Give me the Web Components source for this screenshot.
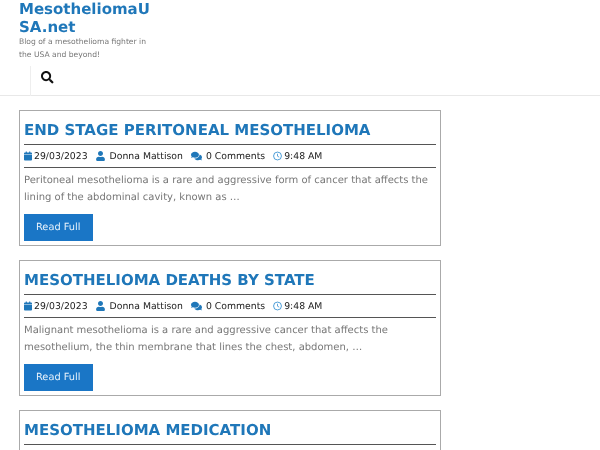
<!DOCTYPE html>
<html>
<head>
<meta charset="utf-8">
<style>
  html, body { margin: 0; padding: 0; background: #fff; overflow: hidden; height: 450px; }
  /* the reference is a soft, downscaled capture */
  body { font-family: "DejaVu Sans", sans-serif; text-rendering: geometricPrecision; filter: blur(.3px); }
</style>
</head>
<body>
<site-header></site-header>
<blog-list>
  <post-card heading="END STAGE PERITONEAL MESOTHELIOMA">Peritoneal mesothelioma is a rare and aggressive form of cancer that affects the lining of the abdominal cavity, known as …</post-card>
  <post-card heading="MESOTHELIOMA DEATHS BY STATE">Malignant mesothelioma is a rare and aggressive cancer that affects the mesothelium, the thin membrane that lines the chest, abdomen, …</post-card>
  <post-card heading="MESOTHELIOMA MEDICATION"></post-card>
</blog-list>
<script>
class SiteHeader extends HTMLElement {
  constructor() {
    super();
    this.attachShadow({ mode: 'open' });
  }

  connectedCallback() {
    this.shadowRoot.innerHTML = `
      <style>
        :host { display: block; height: 95px; border-bottom: 1px solid #e8e8e8; padding: 0 0 0 19px; }
        h1 { margin: 0; width: 135px; font-size: 15px; line-height: 18px; font-weight: 700; color: #1f77b9; word-break: break-all; }
        p { margin: 0; width: 135px; font-size: 7.600px; line-height: 12.500px; color: #777; }
        nav { margin: 5px 0 0 11px; height: 30px; border-left: 1px solid #eee; display: flex; align-items: flex-start; padding-left: 10px; }
        svg { width: 12.500px; height: 12.500px; display: block; margin-top: 5px; }
      </style>
      <h1>MesotheliomaUSA.net</h1>
      <p>Blog of a mesothelioma fighter in the USA and beyond!</p>
      <nav>
        <svg viewBox="0 0 512 512"><path fill="#111" d="M505 442.700L405.300 343c-4.500-4.500-10.600-7-17-7H372c27.600-35.300 44-79.700 44-128C416 93.100 322.900 0 208 0S0 93.100 0 208s93.100 208 208 208c48.300 0 92.700-16.400 128-44v16.300c0 6.400 2.500 12.500 7 17l99.700 99.700c9.400 9.400 24.600 9.400 33.900 0l28.300-28.300c9.400-9.400 9.400-24.600.1-34zM208 336c-70.700 0-128-57.200-128-128 0-70.700 57.200-128 128-128 70.700 0 128 57.200 128 128 0 70.700-57.200 128-128 128z"/></svg>
      </nav>
    `;
  }
}

class BlogList extends HTMLElement {
  constructor() {
    super();
    this.attachShadow({ mode: 'open' });
  }

  connectedCallback() {
    this.shadowRoot.innerHTML = `
      <style>
        :host { display: flex; flex-direction: column; gap: 14px; width: 422px; height: 340px; margin: 14px 0 0 19px; }
      </style>
      <slot></slot>
    `;
  }
}

class PostMeta extends HTMLElement {
  constructor() {
    super();
    this.attachShadow({ mode: 'open' });
  }

  connectedCallback() {
    this.shadowRoot.innerHTML = `
      <style>
        :host { display: flex; align-items: center; height: 22px; border-bottom: 1px solid #555; font-size: 9.300px; color: #222; white-space: nowrap; }
        span { display: inline-flex; align-items: center; }
        svg { display: block; height: 10px; width: 8px; fill: #1f77b9; }
        .date svg { margin-right: 2px; }
        .author { margin-left: 8px; }
        .author svg { width: 9px; margin-right: 5px; }
        .comments { margin-left: 8px; }
        .comments svg { width: 11px; margin-right: 4px; }
        .time { margin-left: 8px; }
        .time svg { width: 9px; margin-right: 2px; }
      </style>
      <span class="date"><svg viewBox="0 0 448 512"><path d="M0 464c0 26.500 21.500 48 48 48h352c26.500 0 48-21.500 48-48V192H0v272zM400 64h-48V16c0-8.800-7.200-16-16-16h-32c-8.800 0-16 7.200-16 16v48H160V16c0-8.800-7.200-16-16-16h-32c-8.800 0-16 7.200-16 16v48H48C21.500 64 0 85.500 0 112v48h448v-48c0-26.500-21.500-48-48-48z"/></svg>29/03/2023</span>
      <span class="author"><svg viewBox="0 0 448 512"><path d="M224 256c70.700 0 128-57.300 128-128S294.700 0 224 0 96 57.300 96 128s57.300 128 128 128zm89.600 32h-16.700c-22.200 10.200-46.900 16-72.900 16s-50.600-5.800-72.900-16h-16.700C60.200 288 0 348.200 0 422.400V464c0 26.500 21.500 48 48 48h352c26.500 0 48-21.500 48-48v-41.600c0-74.200-60.200-134.400-134.400-134.400z"/></svg>Donna Mattison</span>
      <span class="comments"><svg viewBox="0 0 576 512"><path d="M416 192c0-88.400-93.100-160-208-160S0 103.600 0 192c0 34.300 14.100 65.900 38 92-13.400 30.200-35.500 54.200-35.800 54.500-2.200 2.300-2.800 5.700-1.500 8.700S4.800 352 8 352c36.600 0 66.900-12.300 88.700-25 32.200 15.700 70.300 25 111.300 25 114.900 0 208-71.600 208-160zm122 220c23.900-26 38-57.700 38-92 0-66.900-53.500-124.200-129.300-148.100.9 6.600 1.300 13.300 1.300 20.100 0 105.900-107.700 192-240 192-10.800 0-21.300-.8-31.700-1.900C207.800 439.600 281.800 480 368 480c41 0 79.100-9.200 111.300-25 21.800 12.700 52.100 25 88.700 25 3.200 0 6.100-1.900 7.300-4.800 1.300-2.900.7-6.300-1.500-8.700-.3-.3-22.400-24.200-35.800-54.500z"/></svg>0 Comments</span>
      <span class="time"><svg viewBox="0 0 24 24"><circle cx="12" cy="12" r="10.500" fill="none" stroke="#2b8ad0" stroke-width="2.200"/><path d="M12 6v6.500l4.500 2.500" fill="none" stroke="#2b8ad0" stroke-width="2"/></svg>9:48 AM</span>
    `;
  }
}

class PostCard extends HTMLElement {
  constructor() {
    super();
    this.attachShadow({ mode: 'open' });
  }

  connectedCallback() {
    const teaser = this.textContent.trim();
    const body = teaser ? `
      <post-meta></post-meta>
      <p><slot></slot></p>
      <a href="#">Read Full</a>
    ` : '';
    this.shadowRoot.innerHTML = `
      <style>
        :host { display: block; box-sizing: border-box; flex: ${teaser ? 'none' : '1'}; height: ${teaser ? '136px' : 'auto'}; border: 1px solid #aaa; ${teaser ? '' : 'border-bottom: 0;'} padding: 0 4px; overflow: hidden; }
        h2 { margin: 0; height: 33px; border-bottom: 1px solid #555; line-height: 38px; font-size: 15px; font-weight: 700; color: #1f77b9; white-space: nowrap; }
        p { margin: 4px 0 0; height: 34px; font-size: 10px; line-height: 17px; color: #777; }
        a { display: block; box-sizing: border-box; width: 69px; margin-top: 8px; padding-left: 12px; height: 27px; line-height: 28px; background: #1a76c6; color: #e8f2fb; font-size: 9.800px; text-decoration: none; }
      </style>
      <h2>${this.getAttribute('heading')}</h2>
      ${body}
    `;
  }
}

customElements.define('site-header', SiteHeader);
customElements.define('blog-list', BlogList);
customElements.define('post-meta', PostMeta);
customElements.define('post-card', PostCard);
</script>
</body>
</html>
